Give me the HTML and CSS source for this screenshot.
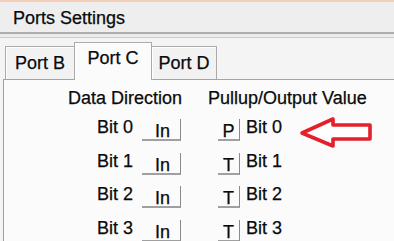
FILE: index.html
```html
<!DOCTYPE html>
<html>
<head>
<meta charset="utf-8">
<link rel="stylesheet" href="styles.css">
</head>
<body>
<div class="topline"></div>
<div class="title">Ports Settings</div>
<div class="rule"></div>
<div class="frame">
  <div class="tabstrip">
    <div class="tab tab-b">Port B</div>
    <div class="tab tab-c active">Port C</div>
    <div class="tab tab-d">Port D</div>
  </div>
  <div class="panel">
    <div class="head">
      <div class="h-dir">Data Direction</div>
      <div class="h-val">Pullup/Output Value</div>
    </div>
    <div class="row">
      <div class="lbl">Bit 0</div>
      <div class="btn io">In</div>
      <div class="btn pt">P</div>
      <div class="val">Bit 0</div>
      <svg class="arrow" width="76" height="34" viewBox="0 0 76 34">
        <polygon points="3,17 34,3 34,9 71,9 71,23 34,23 34,30" fill="#fff" stroke="#e4202a" stroke-width="3.6" stroke-linejoin="round"/>
      </svg>
    </div>
    <div class="row">
      <div class="lbl">Bit 1</div>
      <div class="btn io">In</div>
      <div class="btn pt">T</div>
      <div class="val">Bit 1</div>
    </div>
    <div class="row">
      <div class="lbl">Bit 2</div>
      <div class="btn io">In</div>
      <div class="btn pt">T</div>
      <div class="val">Bit 2</div>
    </div>
    <div class="row">
      <div class="lbl">Bit 3</div>
      <div class="btn io">In</div>
      <div class="btn pt">T</div>
      <div class="val">Bit 3</div>
    </div>
  </div>
</div>
</body>
</html>
```

FILE: styles.css
```css
html, body {
  margin: 0;
  padding: 0;
  height: 100%;
  overflow: hidden;
}
body {
  background: #efefef;
  font-family: "Liberation Sans", Arial, sans-serif;
  font-size: 18px;
  line-height: 20px;
  color: #0a0a0a;
  -webkit-text-stroke: 0.25px #0a0a0a;
  display: flex;
  flex-direction: column;
}
body > *, .frame > *, .panel > * {
  flex-shrink: 0;
}
.topline {
  height: 2px;
  background: #f6cdb6;
}
.title {
  height: 30px;
  box-sizing: border-box;
  padding: 6px 0 0 13px;
  background: #eeeeee;
}
.rule {
  height: 3px;
  border-top: 2px solid #adadad;
  border-bottom: 1px solid #cbcbcb;
  background: #ebebeb;
}
.frame {
  flex: 1 1 auto;
  min-height: 0;
  display: flex;
  flex-direction: column;
  padding-left: 3px;
  background: #f4f4f4;
}
.tabstrip {
  height: 42px;
  box-sizing: border-box;
  display: flex;
  align-items: flex-end;
  padding-left: 2px;
  border-bottom: 1px solid #a4a4a4;
}
.tab {
  height: 33px;
  box-sizing: border-box;
  border: 1px solid #aaaaaa;
  border-bottom: none;
  box-shadow: inset 1px 1px 0 #ffffff;
  background: #f2f2f2;
  text-align: center;
  padding-top: 6px;
}
.tab-b { width: 70px; }
.tab-c {
  width: 78px;
  height: 38px;
  margin-bottom: -1px;
  margin-left: -1px;
  background: #fbfbfb;
  padding-top: 5px;
}
.tab-d { width: 66px; margin-left: -1px; }
.panel {
  flex: 1 1 auto;
  min-height: 0;
  overflow: hidden;
  border-left: 1px solid #9e9e9e;
  background: #fbfbfb;
}
.head {
  display: flex;
  padding-top: 8px;
  height: 20px;
  margin-bottom: 8px;
}
.h-dir {
  width: 178px;
  text-align: right;
}
.h-val {
  margin-left: 26px;
}
.row {
  display: flex;
  align-items: flex-start;
  height: 33.5px;
}
.lbl {
  width: 129px;
  text-align: right;
  margin-top: 1px;
}
.btn {
  height: 22px;
  box-sizing: border-box;
  margin-top: 3px;
  border-right: 1px solid #8a8a8a;
  border-bottom: 2px solid #a0a0a0;
  padding-top: 2px;
  text-align: center;
}
.io {
  width: 39px;
  margin-left: 9px;
  padding-left: 3px;
}
.pt {
  width: 22px;
  margin-left: 37px;
}
.val {
  width: 53px;
  margin-left: 6px;
  margin-top: 1px;
}
.arrow {
  display: block;
  margin-top: 0;
}
```
